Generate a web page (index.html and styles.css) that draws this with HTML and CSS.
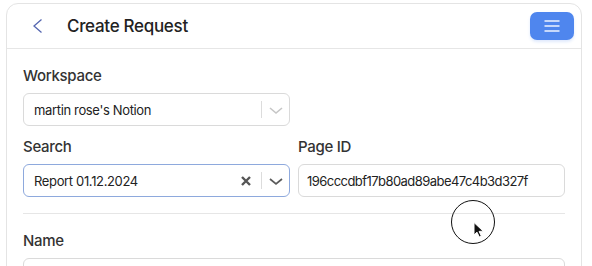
FILE: index.html
```html
<!DOCTYPE html>
<html lang="en">
<head>
    <meta charset="UTF-8">
    <meta name="viewport" content="width=device-width, initial-scale=1.0">
    <title>Create Request</title>
    <link rel="stylesheet" href="styles.css">
</head>
<body>
    <div class="card">
        <div class="header">
            <button class="back-btn" type="button">
                <svg width="20" height="20" viewBox="0 0 20 20"><path d="M10.5 3.5 L3 10 L10.5 16.5" fill="none" stroke="#5566b0" stroke-width="1.3"/></svg>
            </button>
            <h2 class="title">Create Request</h2>
            <button class="menu-btn" type="button">
                <svg width="16" height="14" viewBox="0 0 16 14"><path d="M0.5 2 H15.5 M0.5 7 H15.5 M0.5 12 H15.5" stroke="#eef3ff" stroke-width="1.6"/></svg>
            </button>
        </div>

        <form class="form">
            <div class="grid">
                <div class="field">
                    <label>Workspace</label>
                    <div class="select">
                        <span class="value">martin rose's Notion</span>
                        <span class="sep"></span>
                        <svg class="chev" width="20" height="20" viewBox="0 0 20 20"><path d="M4 8 L10 13 L16 8" fill="none" stroke="#c6c6c6" stroke-width="1.6"/></svg>
                    </div>
                </div>
                <div></div>

                <div class="field">
                    <label>Search</label>
                    <div class="select focused">
                        <span class="value">Report 01.12.2024</span>
                        <svg class="clear" width="20" height="20" viewBox="0 0 20 20"><path d="M6 6 L14 14 M14 6 L6 14" stroke="#555" stroke-width="2.4"/></svg>
                        <span class="sep"></span>
                        <svg class="chev" width="20" height="20" viewBox="0 0 20 20"><path d="M4 8 L10 13 L16 8" fill="none" stroke="#5a5a5a" stroke-width="1.7"/></svg>
                    </div>
                </div>
                <div class="field">
                    <label>Page ID</label>
                    <input class="input" type="text" value="196cccdbf17b80ad89abe47c4b3d327f">
                </div>
            </div>

            <hr class="divider">

            <div class="field">
                <label>Name</label>
                <input class="input" type="text">
            </div>
        </form>
    </div>

    <div class="cursor">
        <svg width="14" height="18" viewBox="0 0 14 18"><path d="M2 1.5 L2 14 L5 11.2 L7.3 16 L9.3 15 L7.1 10.4 L11.2 10.2 Z" fill="#111" stroke="#fff" stroke-width="1"/></svg>
    </div>
</body>
</html>
```

FILE: styles.css
```css
body {
    font-family: Inter, "Noto Sans", Arial, sans-serif;
    background-color: #fff;
    margin: 0;
    padding: 3px 10px 0 6px;
    color: #222;
}

.card {
    border: 1px solid #e4e4e4;
    border-radius: 12px;
    width: 576px;
    box-sizing: border-box;
    height: 300px;
}

.header {
    display: flex;
    align-items: center;
    height: 44px;
    padding: 0 7px 0 24px;
    border-bottom: 1px solid #e6e6e6;
}

.back-btn {
    background: none;
    border: none;
    padding: 0;
    width: 20px;
    height: 20px;
    display: flex;
}

.title {
    margin: 0 0 0 16px;
    font-size: 17px;
    font-weight: 500;
    letter-spacing: -0.3px;
    color: #222;
}

.menu-btn {
    margin-left: auto;
    width: 44px;
    height: 28px;
    border: none;
    border-radius: 7px;
    background-color: #4f86ee;
    box-shadow: 0 2px 3px rgba(79, 134, 238, 0.18);
    display: flex;
    align-items: center;
    justify-content: center;
    padding: 0;
}

.form {
    padding: 17px 16px;
}

.grid {
    display: grid;
    grid-template-columns: 1fr 1fr;
    column-gap: 8px;
    row-gap: 11px;
}

.field {
    display: flex;
    flex-direction: column;
}

label {
    display: block;
    font-size: 15px;
    line-height: 20px;
    font-weight: 500;
    letter-spacing: -0.3px;
    color: #333;
    margin-bottom: 7px;
}

.select {
    display: flex;
    align-items: center;
    height: 33px;
    box-sizing: border-box;
    border: 1px solid #dadada;
    border-radius: 6px;
    padding: 0 3px 0 10px;
    font-size: 13px;
    letter-spacing: -0.35px;
}

.select.focused {
    border-color: #8ea9dd;
}

.value {
    flex: 1;
    color: #222;
}

.sep {
    width: 1px;
    height: 17px;
    background-color: #dcdcdc;
    margin-right: 4px;
}

.clear {
    margin-right: 5px;
}

.input {
    height: 33px;
    box-sizing: border-box;
    border: 1px solid #dadada;
    border-radius: 6px;
    padding: 0 8px;
    font-family: inherit;
    font-size: 13px;
    letter-spacing: -0.55px;
    color: #222;
    width: 100%;
}

.divider {
    border: none;
    border-top: 1px solid #e6e6e6;
    margin: 16px 0 17px;
}

.cursor {
    position: absolute;
    left: 451px;
    top: 200px;
    width: 44px;
    height: 44px;
    box-sizing: border-box;
    border: 1.6px solid #111;
    border-radius: 50%;
}

.cursor svg {
    position: absolute;
    left: 20px;
    top: 20px;
}
```
